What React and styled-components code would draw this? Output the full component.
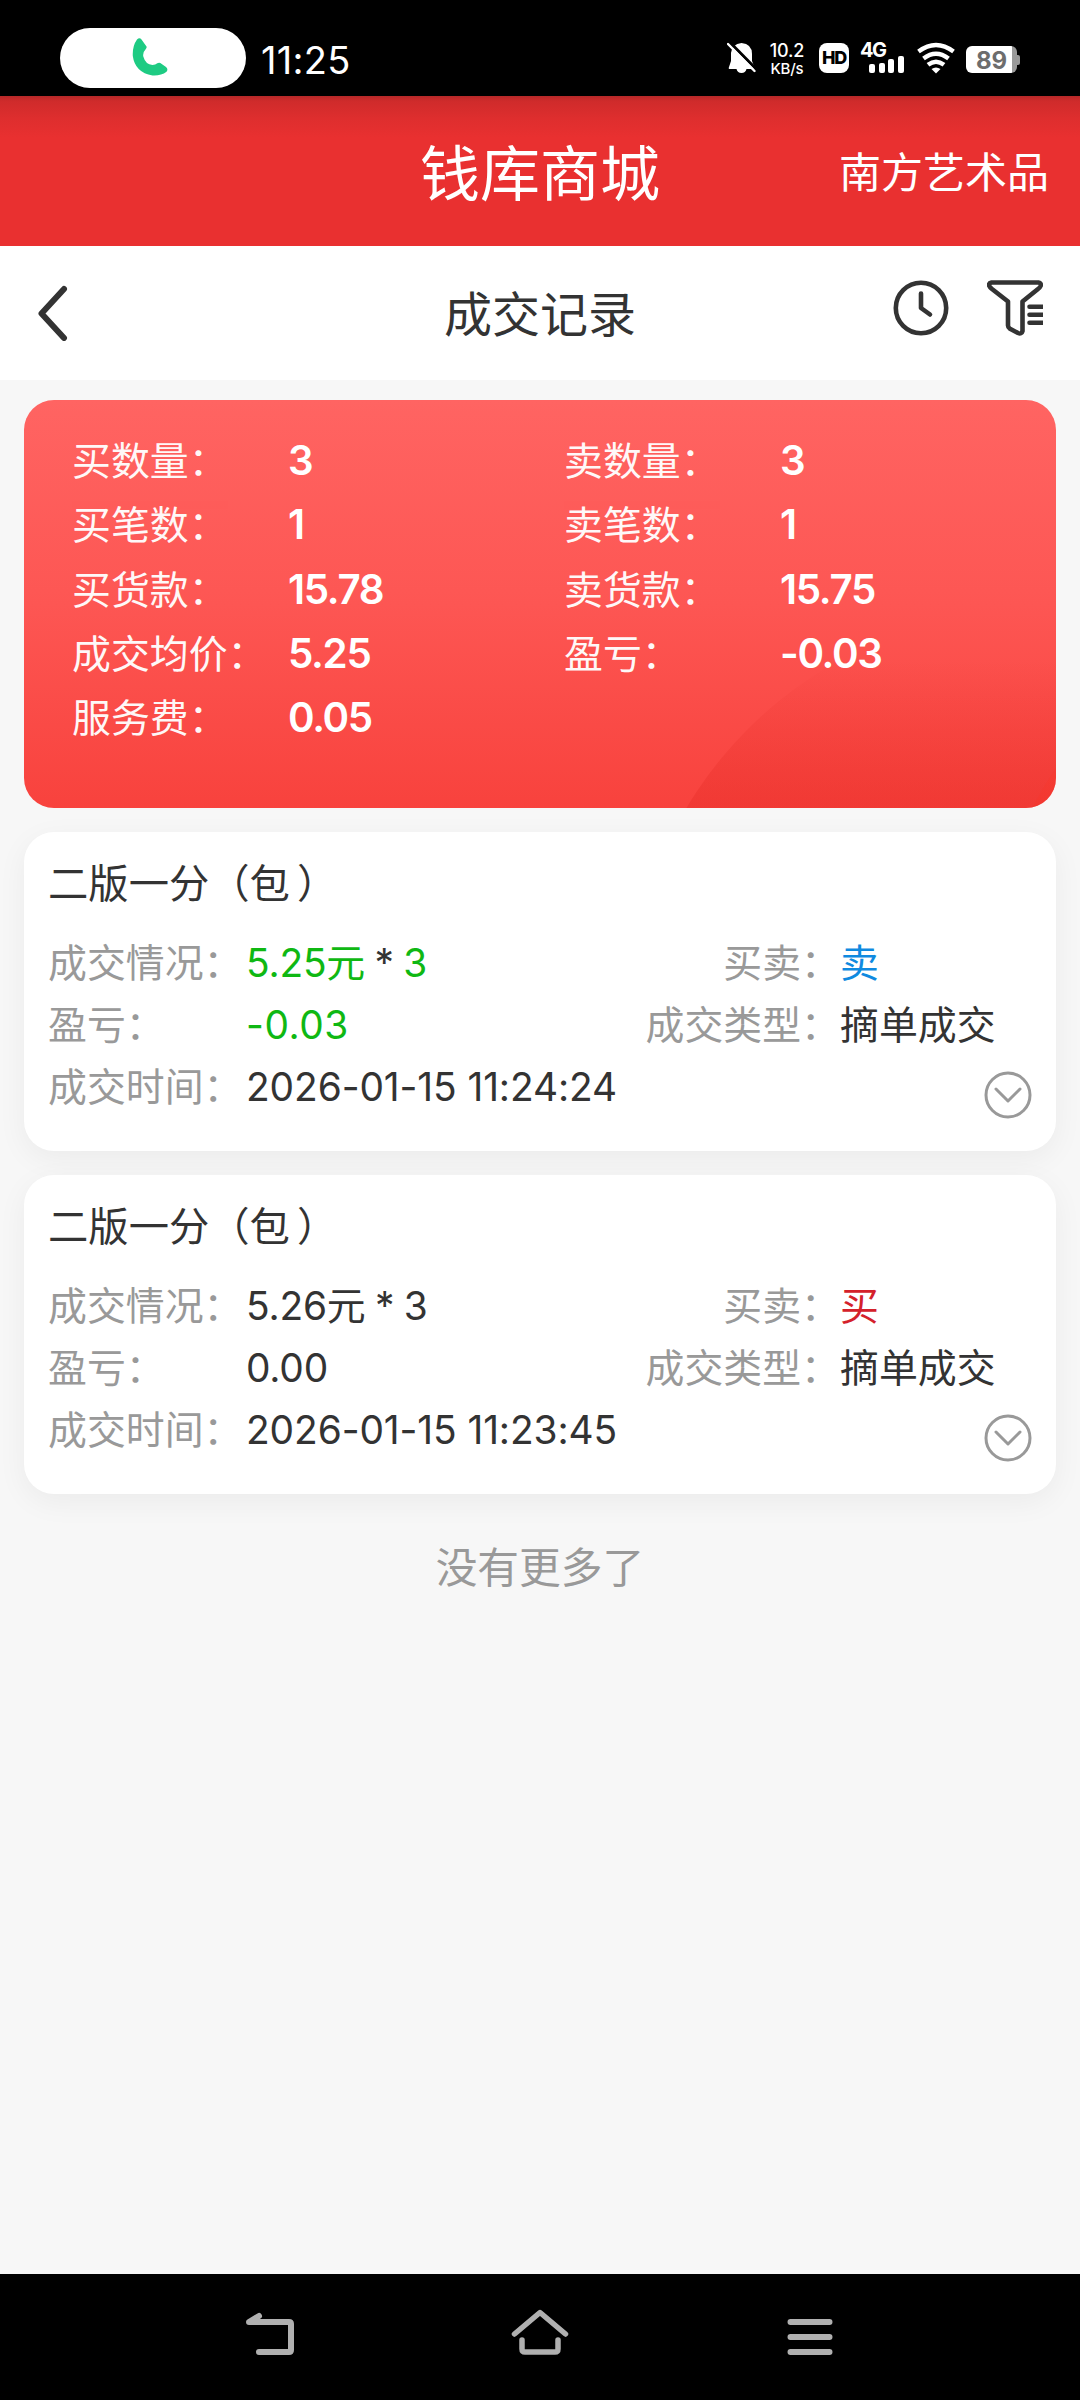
import React from "react";
import styled, { createGlobalStyle } from "styled-components";

const GlobalStyle = createGlobalStyle`
  * { box-sizing: border-box; }
  body {
    margin: 0;
    background: #f7f7f7;
    font-family: Inter, "Noto Sans CJK SC", sans-serif;
    color: #333;
    white-space: nowrap;
  }
  svg { display: block; flex: none; }
`;

const Screen = styled.div`
  width: 1080px;
  height: 2400px;
  display: flex;
  flex-direction: column;
  overflow: hidden;
`;

/* ---------- status bar ---------- */
const StatusBar = styled.div`
  height: 96px;
  flex: none;
  background: #000;
  color: #fff;
  display: flex;
  justify-content: space-between;
  padding: 28px 60px 0;
`;
const StatusLeft = styled.div`
  display: flex;
  gap: 15px;
`;
const CallPill = styled.div`
  width: 186px;
  height: 60px;
  border-radius: 30px;
  background: #fff;
  display: flex;
  justify-content: center;
  padding: 9px 6px 0 0;
`;
const Clock = styled.div`
  font-size: 38px;
  line-height: 65px;
  letter-spacing: 0.3px;
`;
const StatusRight = styled.div`
  display: flex;
  height: 32px;
  margin-top: 14px;
`;
const Speed = styled.div`
  width: 36px;
  margin: 0 14px 0 13px;
  display: flex;
  flex-direction: column;
  align-items: center;
  font-weight: 500;
`;
const SpeedLine = styled.span`
  font-size: ${(p) => p.$size}px;
  line-height: 17.5px;
  letter-spacing: -0.2px;
`;
const HdBadge = styled.div`
  width: 30px;
  height: 30px;
  margin-top: 1px;
  border-radius: 8px;
  background: #fff;
  color: #000;
  font-size: 18px;
  font-weight: 800;
  line-height: 30px;
  text-align: center;
  letter-spacing: -1.2px;
`;
const Signal = styled.div`
  width: 45px;
  margin: 0 12px 0 11px;
`;
const Network = styled.div`
  font-size: 20px;
  font-weight: 700;
  line-height: 17px;
  height: 14px;
  letter-spacing: -1.5px;
`;
const Bars = styled.div`
  display: flex;
  align-items: flex-end;
  gap: 3.6px;
  height: 17px;
  padding-left: 9px;
`;
const Bar = styled.i`
  width: 6px;
  height: ${(p) => p.$h}px;
  border-radius: 2px;
  background: #fff;
`;
const Battery = styled.div`
  display: flex;
  align-items: center;
  margin: 4px 0 0 11px;
  height: 27px;
`;
const BatteryBody = styled.div`
  width: 51px;
  height: 27px;
  border-radius: 6px;
  background: linear-gradient(90deg, #fff 46px, #999 46px);
  color: #6d6d6d;
  font-size: 24px;
  font-weight: 700;
  line-height: 29px;
  padding-left: 10px;
`;
const BatteryCap = styled.div`
  width: 3px;
  height: 10px;
  background: #999;
  border-radius: 0 2px 2px 0;
`;

/* ---------- headers ---------- */
const BrandBar = styled.header`
  height: 150px;
  flex: none;
  display: grid;
  grid-template-columns: 1fr auto 1fr;
  align-items: center;
  padding: 0 31px;
  color: #fff;
  background: linear-gradient(180deg, #b52828 0, #cf2b2b 5px, #de2e2e 22px, #e93030 42px, #e93030 100%);
`;
const BrandTitle = styled.h1`
  grid-column: 2;
  margin: 6px 0 0;
  font-size: 60px;
  font-weight: 400;
  line-height: 80px;
`;
const Shop = styled.div`
  justify-self: end;
  margin-top: 4px;
  font-size: 42px;
  line-height: 60px;
`;
const NavBar = styled.nav`
  height: 134px;
  flex: none;
  display: grid;
  grid-template-columns: 1fr auto 1fr;
  align-items: center;
  padding: 0 37px;
  background: #fff;
`;
const NavTitle = styled.h2`
  margin: 3px 0 0;
  font-size: 48px;
  font-weight: 400;
  line-height: 60px;
`;
const NavActions = styled.div`
  justify-self: end;
  display: flex;
  gap: 38px;
  margin-bottom: 11px;
`;

/* ---------- content ---------- */
const Content = styled.main`
  flex: 1;
  display: flex;
  flex-direction: column;
  gap: 24px;
  padding: 20px 24px 0;
`;
const Summary = styled.section`
  position: relative;
  height: 408px;
  flex: none;
  overflow: hidden;
  border-radius: 30px;
  padding: 29px 48px 0;
  color: #fff;
  background: linear-gradient(180deg, #ff6462 0%, #fd5653 50%, #f8423d 100%);
  &::before, &::after {
    content: "";
    position: absolute;
    border-radius: 50%;
  }
  &::before {
    left: 605px;
    top: 210px;
    width: 812px;
    height: 812px;
    background: linear-gradient(180deg, rgba(226, 40, 34, 0) 50px, rgba(226, 40, 34, 0.33) 190px);
  }
  &::after {
    left: 978px;
    top: 240px;
    width: 600px;
    height: 600px;
    background: rgba(255, 50, 30, 0.16);
  }
`;
const SummaryGrid = styled.div`
  position: relative;
  z-index: 1;
  display: grid;
  grid-template-columns: 216px 276px 216px 1fr;
  grid-auto-rows: 64.3px;
  line-height: 64px;
`;
const SumLabel = styled.span`
  font-size: 38.88px;
  opacity: 0.96;
`;
const SumValue = styled.span`
  font-size: 40.3px;
  font-weight: 600;
  letter-spacing: -1.3px;
`;
const Record = styled.article`
  height: 319px;
  border-radius: 30px;
  background: #fff;
  box-shadow: 0 8px 30px rgba(0, 0, 0, 0.05);
  padding: 21px 24px 0;
`;
const RecordTitle = styled.h3`
  margin: 0 0 17px;
  font-size: 40.32px;
  font-weight: 400;
  line-height: 62px;
`;
const CloseParen = styled.span`
  margin-left: 7px;
`;
const Row = styled.div`
  display: flex;
  height: 62.2px;
  font-size: 38.88px;
  line-height: 62px;
`;
const Label = styled.span`
  width: ${(p) => p.$w || 198}px;
  text-align: ${(p) => p.$align || "left"};
  color: #999;
`;
const Value = styled.span`
  width: ${(p) => p.$w || "auto"};
  color: ${(p) => p.$color || "#333"};
  letter-spacing: ${(p) => p.$track || 0}px;
`;
const Times = styled.span`
  margin: 0 -1.5px;
`;
const Toggle = styled.span`
  margin: 15px 0 0 auto;
`;
const End = styled.p`
  margin: 19px 0 0;
  text-align: center;
  font-size: 41.76px;
  line-height: 62px;
  color: #999;
`;

const SystemNav = styled.footer`
  height: 126px;
  flex: none;
  background: #000;
  display: flex;
  justify-content: space-between;
  align-items: flex-start;
  padding: 33px 240px 0;
`;

const summary = [
  ["买数量：", "3", "卖数量：", "3"],
  ["买笔数：", "1", "卖笔数：", "1"],
  ["买货款：", "15.78", "卖货款：", "15.75"],
  ["成交均价：", "5.25", "盈亏：", "-0.03"],
  ["服务费：", "0.05"],
];

const GREEN = "#0fb813";
const records = [
  { price: "5.25元", qty: "3", profit: "-0.03", tone: GREEN, side: "卖", sideColor: "#0f8ae0", time: "2026-01-15 11:24:24" },
  { price: "5.26元", qty: "3", profit: "0.00", tone: "#333", side: "买", sideColor: "#d4212b", time: "2026-01-15 11:23:45" },
];

const PhoneIcon = () => (
  <svg width="36" height="40" viewBox="0 0 36 40" fill="#1ecb83">
    <path d="M5 2.5 Q7.5 0 9.5 2.5 L14.5 9.5 Q15 10.5 13.8 12 Q10.5 15.5 11.3 19.5 Q13.5 27.5 20.5 28 Q23.5 27.8 25.3 26.3 Q26.8 25.2 28.3 26 L34 30 Q36.5 32 34.5 34.8 Q29 39 20.5 38.5 Q3 35.5 0.8 19 Q0.3 9 5 2.5Z" />
  </svg>
);

const BellOffIcon = () => (
  <svg width="29" height="32" viewBox="0 0 29 32">
    <path d="M14.5 1 Q25 2 25 12 V19 L27.5 25 Q28 27 26 27 H19.5 Q18.5 31 14.5 31 Q10.5 31 9.5 27 H3 Q1 27 2 25 L4 19 V11 Q5 2 14.5 1Z" fill="#fff" />
    <path d="M2.5 0 L30 28" stroke="#000" strokeWidth="3" />
    <path d="M1 2 L27.5 29" stroke="#fff" strokeWidth="2.4" strokeLinecap="round" />
  </svg>
);

const WifiIcon = () => (
  <svg width="38" height="32" viewBox="0 0 38 32" fill="none" stroke="#fff" strokeWidth="4.4">
    <path d="M1.5 9.5 Q19 -3.5 36.5 9.5" />
    <path d="M6.5 16.5 Q19 7 31.5 16.5" />
    <path d="M11 22.8 Q19 16.5 27 22.8" />
    <path d="M14.5 27 Q19 24 23.5 27 L19 31.5Z" fill="#fff" stroke="none" />
  </svg>
);

const BackIcon = () => (
  <svg width="32" height="56" viewBox="0 0 32 56" fill="none" stroke="#333" strokeWidth="6" strokeLinecap="round" strokeLinejoin="round">
    <path d="M27 4 L4.5 28.5 L27 53" />
  </svg>
);

const ClockIcon = () => (
  <svg width="56" height="56" viewBox="0 0 56 56" fill="none" stroke="#333" strokeWidth="4.6" strokeLinecap="round" strokeLinejoin="round">
    <circle cx="28" cy="28" r="25.2" />
    <path d="M28 13.5 V28 L37 34.5" />
  </svg>
);

const FilterIcon = () => (
  <svg width="56" height="56" viewBox="0 0 56 56" fill="none" stroke="#333" strokeWidth="4.6" strokeLinejoin="round">
    <path d="M4.5 2.5 H51.5 Q54.5 3 53.6 6 Q53 7.5 51 9 L35.5 21.5 V51 Q34.5 54.5 31 53 L23 48.8 Q21 47.5 21 45.5 V21.5 L5 9 Q2 6.5 2 5 Q2 3 4.5 2.5Z" />
    <path d="M42.5 26.7 H56 M42.5 34.7 H56 M42.5 42.7 H56" strokeLinecap="round" />
  </svg>
);

const ExpandIcon = () => (
  <svg width="48" height="48" viewBox="0 0 48 48" fill="none" stroke="#999" strokeWidth="3" strokeLinecap="round" strokeLinejoin="round">
    <circle cx="24" cy="24" r="22" />
    <path d="M12 18 L24 30 L36 18" />
  </svg>
);

const SysBackIcon = () => (
  <svg width="60" height="60" viewBox="0 0 60 60" fill="none" stroke="#b0b0b0" strokeWidth="6" strokeLinecap="round" strokeLinejoin="round">
    <path d="M19 45 H49 Q51 45 51 43 V17 Q51 15 49 15 H9 L19 9" />
    <path d="M9 14 L19 9 V14Z" fill="#b0b0b0" strokeWidth="2" />
  </svg>
);

const SysHomeIcon = () => (
  <svg width="60" height="60" viewBox="0 0 60 60" fill="none" stroke="#b0b0b0" strokeWidth="5.5" strokeLinecap="round" strokeLinejoin="round">
    <path d="M4.5 27 L30 5.5 L55.5 27" />
    <path d="M12 33 V42 Q12 45 15 45 H45 Q48 45 48 42 V33" />
  </svg>
);

const SysMenuIcon = () => (
  <svg width="60" height="60" viewBox="0 0 60 60" stroke="#b0b0b0" strokeWidth="6" strokeLinecap="round">
    <path d="M10.5 15 H49.5 M10.5 30 H49.5 M10.5 45 H49.5" />
  </svg>
);

function RecordCard({ item }) {
  return (
    <Record>
      <RecordTitle>二版一分（包<CloseParen>）</CloseParen></RecordTitle>
      <Row>
        <Label>成交情况：</Label>
        <Value $w="330px">
          <Value $color={item.tone} $track={-0.2}>{item.price}</Value>
          <Times> * </Times>
          <Value $color={item.tone}>{item.qty}</Value>
        </Value>
        <Label $w={264} $align="right">买卖：</Label>
        <Value $color={item.sideColor}>{item.side}</Value>
      </Row>
      <Row>
        <Label>盈亏：</Label>
        <Value $w="330px" $color={item.tone} $track={item.profit.startsWith("-") ? 0.5 : -0.2}>{item.profit}</Value>
        <Label $w={264} $align="right">成交类型：</Label>
        <Value>摘单成交</Value>
      </Row>
      <Row>
        <Label>成交时间：</Label>
        <Value $track={-0.1}>{item.time}</Value>
        <Toggle><ExpandIcon /></Toggle>
      </Row>
    </Record>
  );
}

export default function App() {
  return (
    <Screen lang="zh-CN">
      <GlobalStyle />
      <StatusBar>
        <StatusLeft>
          <CallPill><PhoneIcon /></CallPill>
          <Clock>11:25</Clock>
        </StatusLeft>
        <StatusRight>
          <BellOffIcon />
          <Speed>
            <SpeedLine $size={18}>10.2</SpeedLine>
            <SpeedLine $size={15}>KB/s</SpeedLine>
          </Speed>
          <HdBadge>HD</HdBadge>
          <Signal>
            <Network>4G</Network>
            <Bars>
              <Bar $h={9} /><Bar $h={10} /><Bar $h={14} /><Bar $h={17} />
            </Bars>
          </Signal>
          <WifiIcon />
          <Battery>
            <BatteryBody>89</BatteryBody>
            <BatteryCap />
          </Battery>
        </StatusRight>
      </StatusBar>
      <BrandBar>
        <BrandTitle>钱库商城</BrandTitle>
        <Shop>南方艺术品</Shop>
      </BrandBar>
      <NavBar>
        <BackIcon />
        <NavTitle>成交记录</NavTitle>
        <NavActions>
          <ClockIcon />
          <FilterIcon />
        </NavActions>
      </NavBar>
      <Content>
        <Summary>
          <SummaryGrid>
            {summary.map(([a, av, b, bv]) => (
              <React.Fragment key={a}>
                <SumLabel>{a}</SumLabel>
                <SumValue>{av}</SumValue>
                {b && <SumLabel>{b}</SumLabel>}
                {b && <SumValue>{bv}</SumValue>}
              </React.Fragment>
            ))}
          </SummaryGrid>
        </Summary>
        {records.map((r) => <RecordCard key={r.time} item={r} />)}
        <End>没有更多了</End>
      </Content>
      <SystemNav>
        <SysBackIcon />
        <SysHomeIcon />
        <SysMenuIcon />
      </SystemNav>
    </Screen>
  );
}
